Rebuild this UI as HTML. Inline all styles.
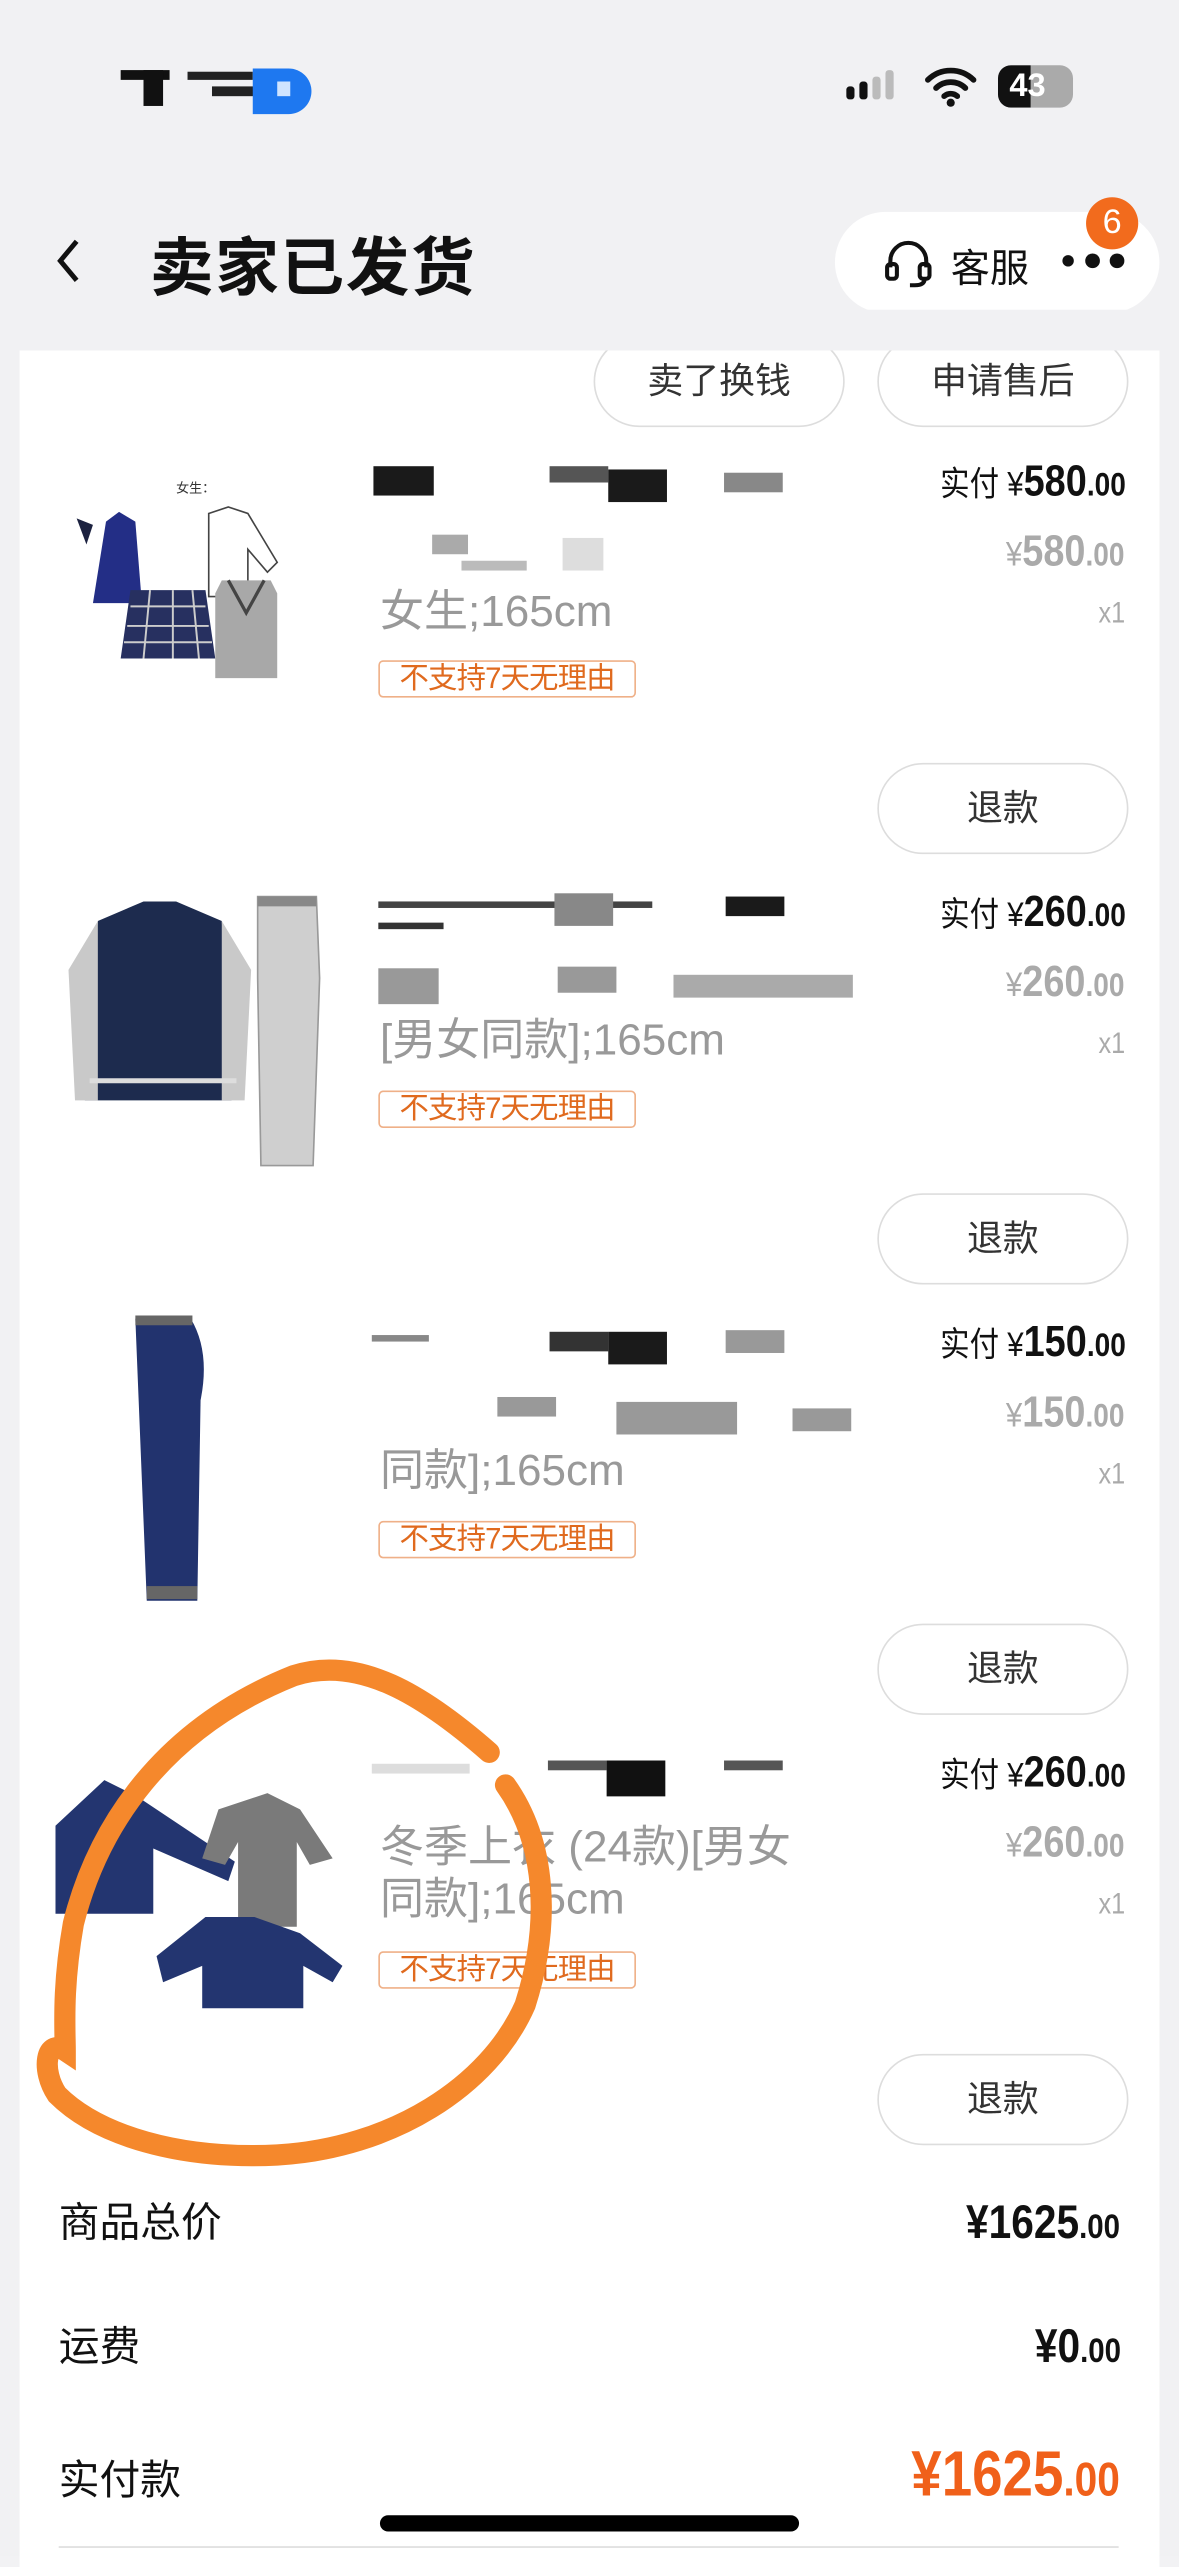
<!DOCTYPE html>
<html><head><meta charset="utf-8"><style>
*{margin:0;padding:0;box-sizing:border-box}
html,body{width:1179px;height:2556px;overflow:hidden;background:#f2f2f4}
#w{position:absolute;left:0;top:0;width:723px;height:1568px;transform:scale(1.63071,1.6301);transform-origin:0 0;font-family:"Liberation Sans","Noto Sans CJK SC",sans-serif;background:#f1f1f3}
.a{position:absolute}
.card{left:12px;top:215px;width:699px;height:1360px;background:#fff}
.btn{position:absolute;width:154px;height:56px;border:1.5px solid #ddd;border-radius:28px;font-size:22px;color:#333;text-align:center;line-height:53px;background:#fff}
.pr{position:absolute;right:33px;text-align:right;white-space:nowrap;transform:scaleX(0.86);transform-origin:right center}
.pr b{font-size:27px}.pr small{font-size:20px;font-weight:bold}
.p1{color:#111;font-size:21px}
.p2{color:#aaa;font-size:21px}
.x1{color:#aaa;font-size:18px}
.sp{position:absolute;left:233px;font-size:27px;line-height:32px;color:#999;white-space:nowrap}
.tag{position:absolute;left:232px;width:158px;height:23px;border:1px solid #efb088;border-radius:3px;color:#e06a1e;font-size:18px;line-height:21px;text-align:center;letter-spacing:-0.5px;white-space:nowrap}
.bl{position:absolute;height:4px}
.lab{position:absolute;left:36px;font-size:25px;color:#111}
.val{position:absolute;right:36px;font-weight:bold;color:#111;transform:scaleX(0.86);transform-origin:right center;white-space:nowrap}
</style></head><body><div id="w">
<div class="a" style="left:74px;top:43px;width:30px;height:6px;background:#111"></div>
<div class="a" style="left:88px;top:43px;width:12px;height:22px;background:#111"></div>
<div class="a" style="left:115px;top:44px;width:40px;height:5px;background:#222"></div>
<div class="a" style="left:130px;top:53px;width:26px;height:6px;background:#222"></div>
<div class="a" style="left:155px;top:42px;width:36px;height:28px;background:#1e78f0;border-radius:0 14px 14px 0"></div>
<div class="a" style="left:170px;top:50px;width:8px;height:9px;background:#cfe4ff"></div>
<svg class="a" style="left:518px;top:42px" width="40" height="24"><rect x="1" y="11" width="5" height="8" rx="2" fill="#111"/><rect x="9" y="8" width="5" height="11" rx="2" fill="#111"/><rect x="17" y="5" width="5" height="14" rx="2" fill="#bbb"/><rect x="25" y="1" width="5" height="18" rx="2" fill="#bbb"/></svg>
<svg class="a" style="left:567px;top:40px" width="32" height="26" viewBox="0 0 32 26"><path d="M2 9a20 20 0 0 1 28 0M7 14a13 13 0 0 1 18 0M12 19a6 6 0 0 1 8 0" stroke="#111" stroke-width="3.5" fill="none" stroke-linecap="round"/><circle cx="16" cy="23" r="2.5" fill="#111"/></svg>
<div class="a" style="left:612px;top:40px;width:46px;height:26px;border-radius:8px;background:#aaa;overflow:hidden"><div style="width:20px;height:26px;background:#111"></div><span style="position:absolute;left:7px;top:2px;color:#fff;font-weight:bold;font-size:20px">43</span></div>
<svg class="a" style="left:32px;top:145px" width="20" height="30"><path d="M15 3 5 15l10 12" stroke="#111" stroke-width="3" fill="none"/></svg>
<div class="a" style="left:92px;top:134px;font-size:39px;font-weight:bold;color:#111;letter-spacing:1px">卖家已发货</div>
<div class="a" style="left:512px;top:130px;width:199px;height:62px;border-radius:31px;background:#fff"></div>
<svg class="a" style="left:541px;top:146px" width="32" height="32" viewBox="0 0 32 32"><path d="M5 18v-4a11 11 0 0 1 22 0v4" stroke="#111" stroke-width="2.5" fill="none"/><rect x="3" y="16" width="6" height="9" rx="2" stroke="#111" stroke-width="2.5" fill="none"/><rect x="23" y="16" width="6" height="9" rx="2" stroke="#111" stroke-width="2.5" fill="none"/><path d="M26 25q0 4-6 4h-3" stroke="#111" stroke-width="2.5" fill="none"/></svg>
<div class="a" style="left:583px;top:145px;font-size:24px;color:#111">客服</div>
<svg class="a" style="left:650px;top:153px" width="42" height="14"><circle cx="5" cy="7" r="3.5" fill="#111"/><circle cx="20" cy="7" r="4.5" fill="#111"/><circle cx="35" cy="7" r="4.5" fill="#111"/></svg>
<div class="a" style="left:666px;top:121px;width:32px;height:32px;border-radius:16px;background:#f26b1d;color:#fff;font-size:21px;text-align:center;line-height:32px">6</div>
<div class="a card"></div>
<div class="btn" style="left:364px;top:206px">卖了换钱</div>
<div class="btn" style="left:538px;top:206px">申请售后</div>
<div class="a" style="left:0;top:190px;width:723px;height:25px;background:#f1f1f3"></div>

<svg class="a" style="left:40px;top:290px" width="156" height="150" viewBox="0 0 156 150">
<text x="68" y="12" font-size="8" fill="#333">女生：</text>
<path d="M25 30l8-6 10 6 4 50-30 0z" fill="#232e86"/><path d="M7 28l10 4-4 12z" fill="#1c2240"/>
<path d="M88 25l12-4 12 4 18 30-6 6-12-14v29H88z" fill="#fff" stroke="#444"/>
<path d="M40 72h46l6 42H34z" fill="#273060"/><path d="M40 82h46M38 94h50M36 104h54M52 72l-4 42M66 72v42M78 72l4 42" stroke="#ccc" stroke-width="1.2"/>
<path d="M96 66h30l4 8v52l-38 0V74z" fill="#a8a8a8"/><path d="M100 66l11 20 11-20" stroke="#444" stroke-width="2" fill="none"/>
</svg>
<div class="bl" style="left:229px;top:286px;width:37px;height:18px;background:#1a1a1a"></div>
<div class="bl" style="left:337px;top:286px;width:36px;height:10px;background:#555"></div>
<div class="bl" style="left:373px;top:288px;width:36px;height:20px;background:#1a1a1a"></div>
<div class="bl" style="left:444px;top:290px;width:36px;height:12px;background:#888"></div>
<div class="bl" style="left:265px;top:328px;width:22px;height:12px;background:#aaa"></div>
<div class="bl" style="left:283px;top:344px;width:40px;height:6px;background:#bbb"></div>
<div class="bl" style="left:345px;top:330px;width:25px;height:20px;background:#ddd"></div>
<div class="sp" style="top:359px">女生;165cm</div>
<div class="tag" style="top:405px">不支持7天无理由</div>
<div class="pr p1" style="top:280px">实付 ¥<b>580</b><small>.00</small></div>
<div class="pr p2" style="top:323px">¥<b>580</b><small>.00</small></div>
<div class="pr x1" style="top:366px">x1</div>
<div class="btn" style="left:538px;top:468px">退款</div>

<svg class="a" style="left:40px;top:545px" width="160" height="175" viewBox="0 0 160 175">
<path d="M20 20l28-12h20l28 12 6 110H12z" fill="#1d2b4e"/><path d="M20 20L2 50l4 80h14zM96 20l18 30-4 80H96z" fill="#c9c9c9"/><path d="M15 118h90" stroke="#ddd" stroke-width="3"/>
<path d="M118 5h36l2 50-4 115h-32l-2-115z" fill="#cfcfcf" stroke="#999"/><rect x="118" y="5" width="36" height="6" fill="#888"/>
</svg>
<div class="bl" style="left:232px;top:553px;width:168px;height:4px;background:#444"></div>
<div class="bl" style="left:232px;top:566px;width:40px;height:4px;background:#333"></div>
<div class="bl" style="left:340px;top:548px;width:36px;height:20px;background:#888"></div>
<div class="bl" style="left:445px;top:550px;width:36px;height:12px;background:#1a1a1a"></div>
<div class="bl" style="left:232px;top:594px;width:37px;height:22px;background:#999"></div>
<div class="bl" style="left:342px;top:593px;width:36px;height:16px;background:#999"></div>
<div class="bl" style="left:413px;top:598px;width:110px;height:14px;background:#aaa"></div>
<div class="sp" style="top:622px">[男女同款];165cm</div>
<div class="tag" style="top:669px">不支持7天无理由</div>
<div class="pr p1" style="top:544px">实付 ¥<b>260</b><small>.00</small></div>
<div class="pr p2" style="top:587px">¥<b>260</b><small>.00</small></div>
<div class="pr x1" style="top:630px">x1</div>
<div class="btn" style="left:538px;top:732px">退款</div>

<svg class="a" style="left:80px;top:805px" width="55" height="180" viewBox="0 0 55 180"><path d="M3 4h34q12 20 6 50l-2 123H10z" fill="#22336e"/><rect x="3" y="2" width="35" height="6" fill="#666"/><rect x="10" y="168" width="31" height="8" fill="#666"/></svg>
<div class="bl" style="left:228px;top:819px;width:35px;height:4px;background:#888"></div>
<div class="bl" style="left:337px;top:817px;width:36px;height:12px;background:#333"></div>
<div class="bl" style="left:373px;top:817px;width:36px;height:20px;background:#1a1a1a"></div>
<div class="bl" style="left:445px;top:816px;width:36px;height:14px;background:#999"></div>
<div class="bl" style="left:305px;top:857px;width:36px;height:12px;background:#999"></div>
<div class="bl" style="left:378px;top:860px;width:74px;height:20px;background:#999"></div>
<div class="bl" style="left:486px;top:864px;width:36px;height:14px;background:#999"></div>
<div class="sp" style="top:886px">同款];165cm</div>
<div class="tag" style="top:933px">不支持7天无理由</div>
<div class="pr p1" style="top:808px">实付 ¥<b>150</b><small>.00</small></div>
<div class="pr p2" style="top:851px">¥<b>150</b><small>.00</small></div>
<div class="pr x1" style="top:894px">x1</div>
<div class="btn" style="left:538px;top:996px">退款</div>

<svg class="a" style="left:34px;top:1080px" width="180" height="160" viewBox="0 0 180 160">
<path d="M0 40l30-28 20 10 60 40-4 12-46-20v40H0z" fill="#233570"/>
<path d="M100 30l30-10 20 10 20 30-14 4-8-14v52h-36V50l-8 14-14-4z" fill="#7a7a7a"/>
<path d="M62 120l30-24h30l28 10 26 20-6 10-18-10v26h-62v-26l-24 10z" fill="#233570"/>
</svg>
<div class="bl" style="left:336px;top:1080px;width:36px;height:6px;background:#555"></div>
<div class="bl" style="left:372px;top:1080px;width:36px;height:22px;background:#111"></div>
<div class="bl" style="left:444px;top:1080px;width:36px;height:6px;background:#555"></div>
<div class="bl" style="left:228px;top:1082px;width:60px;height:6px;background:#ddd"></div>
<div class="sp" style="top:1117px">冬季上衣 (24款)[男女<br>同款];165cm</div>
<div class="tag" style="top:1197px">不支持7天无理由</div>
<div class="pr p1" style="top:1072px">实付 ¥<b>260</b><small>.00</small></div>
<div class="pr p2" style="top:1115px">¥<b>260</b><small>.00</small></div>
<div class="pr x1" style="top:1158px">x1</div>
<div class="btn" style="left:538px;top:1260px">退款</div>
<svg class="a" style="left:0;top:0" width="723" height="1568"><path d="M300 1075C260 1040 220 1015 180 1028C100 1060 60 1120 45 1180C38 1220 40 1245 40 1258C28 1250 25 1270 35 1285C60 1310 110 1325 170 1322C240 1318 300 1280 322 1230C338 1180 335 1130 310 1095" stroke="#f5882c" stroke-width="13" fill="none" stroke-linecap="round"/></svg>

<div class="lab" style="top:1344px">商品总价</div>
<div class="val" style="top:1348px;font-size:29px">¥1625<span style="font-size:21px">.00</span></div>
<div class="lab" style="top:1420px">运费</div>
<div class="val" style="top:1424px;font-size:29px">¥0<span style="font-size:21px">.00</span></div>
<div class="lab" style="top:1502px">实付款</div>
<div class="val" style="top:1497px;font-size:39px;color:#f0601a">¥1625<span style="font-size:29px">.00</span></div>
<div class="a" style="left:233px;top:1543px;width:257px;height:10px;border-radius:5px;background:#000"></div>
<div class="a" style="left:36px;top:1562px;width:650px;height:1px;background:#ddd"></div>
</div></body></html>
